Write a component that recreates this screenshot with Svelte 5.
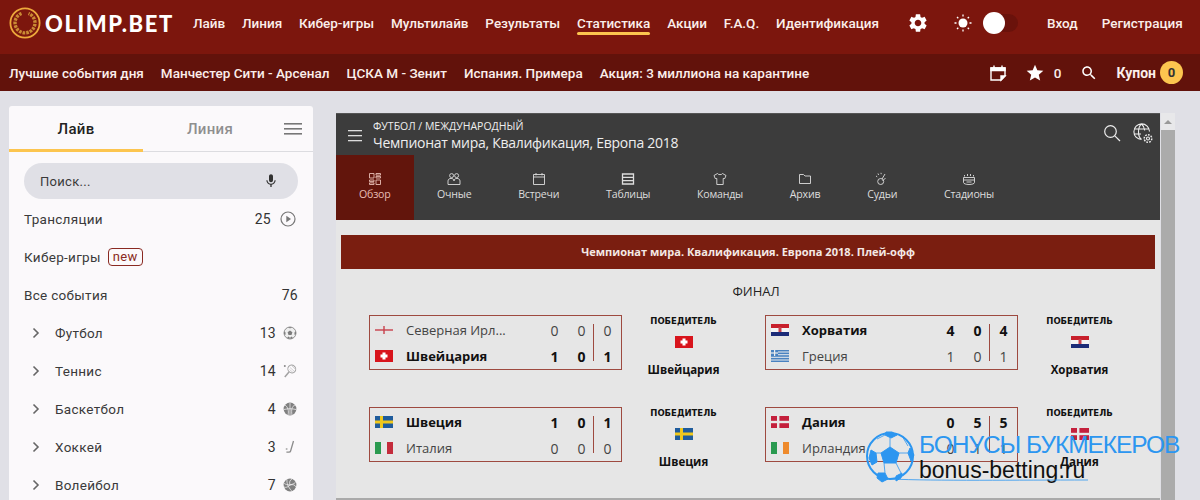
<script lang="ts">
  const nav = ["Лайв", "Линия", "Кибер-игры", "Мультилайв", "Результаты", "Статистика", "Акции", "F.A.Q.", "Идентификация"];
  const sub = ["Лучшие события дня", "Манчестер Сити - Арсенал", "ЦСКА М - Зенит", "Испания. Примера", "Акция: 3 миллиона на карантине"];
  const sports = [
    { name: "Футбол", count: 13, icon: "football" },
    { name: "Теннис", count: 14, icon: "tennis" },
    { name: "Баскетбол", count: 4, icon: "basket" },
    { name: "Хоккей", count: 3, icon: "hockey" },
    { name: "Волейбол", count: 7, icon: "volley" }
  ];
  const tabs = ["Обзор", "Очные", "Встречи", "Таблицы", "Команды", "Архив", "Судьи", "Стадионы"];
  const matches = [
    { a: { flag: "nir", name: "Северная Ирл...", s: [0, 0, 0] }, b: { flag: "ch", name: "Швейцария", s: [1, 0, 1], win: true } },
    { a: { flag: "hr", name: "Хорватия", s: [4, 0, 4], win: true }, b: { flag: "gr", name: "Греция", s: [1, 0, 1] } },
    { a: { flag: "se", name: "Швеция", s: [1, 0, 1], win: true }, b: { flag: "it", name: "Италия", s: [0, 0, 0] } },
    { a: { flag: "dk", name: "Дания", s: [0, 5, 5], win: true }, b: { flag: "ie", name: "Ирландия", s: [0, 1, 1] } }
  ];
  const winner = (m: any) => (m.a.win ? m.a : m.b);
</script>

{#snippet flag(code)}
  <svg class="flag" width="18" height="12" viewBox="0 0 18 12">
    {#if code === "nir"}
      <rect width="18" height="12" fill="#e6e4e4" /><rect y="5.3" width="18" height="1.4" fill="#c8404c" /><rect x="8.3" y="2" width="1.4" height="8" fill="#c8404c" />
    {:else if code === "ch"}
      <rect width="18" height="12" fill="#d8141c" /><rect x="7.5" y="2.5" width="3" height="7" fill="#fff" /><rect x="5.5" y="4.5" width="7" height="3" fill="#fff" />
    {:else if code === "hr"}
      <rect width="18" height="4" fill="#c8202c" /><rect y="4" width="18" height="4" fill="#f4f4f4" /><rect y="8" width="18" height="4" fill="#1c2c78" /><rect x="7.5" y="3" width="3" height="5" fill="#c8404c" />
    {:else if code === "gr"}
      <rect width="18" height="12" fill="#4a82c0" /><rect y="1.5" width="18" height="1" fill="#eee" /><rect y="4.2" width="18" height="1" fill="#eee" /><rect y="6.8" width="18" height="1" fill="#eee" /><rect y="9.5" width="18" height="1" fill="#eee" /><rect width="7" height="6" fill="#4a82c0" /><rect x="3" width="1.2" height="6" fill="#eee" /><rect y="2.4" width="7" height="1.2" fill="#eee" />
    {:else if code === "se"}
      <rect width="18" height="12" fill="#1f5c9c" /><rect x="5" width="3" height="12" fill="#f0c81c" /><rect y="4.5" width="18" height="3" fill="#f0c81c" />
    {:else if code === "it"}
      <rect width="6" height="12" fill="#2a9a50" /><rect x="6" width="6" height="12" fill="#e8e8e8" /><rect x="12" width="6" height="12" fill="#c42c3c" />
    {:else if code === "dk"}
      <rect width="18" height="12" fill="#c4203c" /><rect x="6" width="2.4" height="12" fill="#e8e8e8" /><rect y="4.8" width="18" height="2.4" fill="#e8e8e8" />
    {:else}
      <rect width="6" height="12" fill="#2a9a50" /><rect x="6" width="6" height="12" fill="#e8e8e8" /><rect x="12" width="6" height="12" fill="#ee8a2c" />
    {/if}
  </svg>
{/snippet}

{#snippet sportIcon(kind)}
  <svg class="sport" width="14" height="14" viewBox="0 0 14 14">
    {#if kind === "football"}
      <circle cx="7" cy="7" r="6" fill="#eeeeee" stroke="#8e8e8e" stroke-width="1" />
      <path d="M7 4.400 9.400 6.200 8.500 9H5.500L4.600 6.200zM5.200 1.200H8.800L7 2.600zM1.200 5.400 2.600 6.400 2.400 9 1 8zM12.800 5.400 11.400 6.400 11.600 9 13 8zM4 12l1.400-1.400 1.400 1L6.400 13zM10 12l-1.400-1.400-1.400 1L7.600 13z" fill="#7c7c7c" />
    {:else if kind === "tennis"}
      <ellipse cx="8.800" cy="5" rx="4" ry="3.800" fill="none" stroke="#a2a2a2" stroke-width="1" transform="rotate(40 8.800 5)" />
      <path d="M6 8 1.800 13" stroke="#a2a2a2" stroke-width="1.500" />
      <path d="M7 3.500l4 3.500M6.500 5.500l3.500 3M9 2l3 3" stroke="#bcbcbc" stroke-width=".6" />
      <circle cx="1.800" cy="2" r="1" fill="#888" />
    {:else if kind === "basket"}
      <circle cx="7" cy="7" r="6.400" fill="#808080" />
      <path d="M2 3c3 2 4 6 3 10M12 3C9 4 8 8 9 13M1 7.500c4-1 8-1 12 0M7 .8v12.400" stroke="#fbf9fb" stroke-width=".7" fill="none" />
    {:else if kind === "hockey"}
      <path d="M10.500 1 7.600 11c-.2.8-.8 1.200-1.600 1.200H3.400" stroke="#8c8c8c" stroke-width="1.300" fill="none" />
      <circle cx="3.600" cy="9" r="1" fill="#b0b0b0" />
    {:else}
      <circle cx="7" cy="7" r="6.400" fill="#808080" />
      <path d="M7 7C6 4 7 2 9 1M7 7c3-1 5 0 6 2M7 7c-2 2-4 3-6 2M4 1.600C3.600 5 5 9 8.600 12.800M1.200 5.400C4 7.400 8 7.600 12.400 4.600" stroke="#fbf9fb" stroke-width=".7" fill="none" />
    {/if}
  </svg>
{/snippet}

{#snippet tabIcon(i)}
  <svg class="tab-icon" width="14" height="14" viewBox="0 0 14 14" fill="none" stroke="currentColor" stroke-width=".9">
    {#if i === 0}
      <path d="M1.500 1.500h4.500v4.500h-4.500zM8 1.500h4.500v1.600H8zM8 4.400h4.500V6H8zM1.500 8h4.500v1.600H1.500zM1.500 10.900h4.500v1.600H1.500zM8 8h4.500v4.500H8z" />
    {:else if i === 1}
      <circle cx="4.600" cy="3.600" r="2" /><circle cx="9.600" cy="3.600" r="2" /><path d="M1 12.500V9c0-1.600 1.400-2.600 3-2.600s3 .8 3 2.600c0-1.800 1.400-2.600 3-2.600s3 1 3 2.600v3.500z" />
    {:else if i === 2}
      <path d="M1.500 2.500h11v10h-11zM1.500 5h11M4 1v2.400M10 1v2.400" />
    {:else if i === 3}
      <path d="M1.500 2h11v10h-11zM1.500 5.300h11M1.500 8.600h11" stroke-width="1.300" />
    {:else if i === 4}
      <path d="M4.500 1.500 1 3.500 2.200 6.500h1.600v6h6.400v-6h1.600L13 3.500 9.500 1.500C9 3 5 3 4.500 1.500z" />
    {:else if i === 5}
      <path d="M1.500 2.500h4l1.500 1.500h5.500v7.500h-11z" />
    {:else if i === 6}
      <circle cx="5.700" cy="9.500" r="3" /><path d="M7 7 10 2M7.500 9l3-3M3 1.500l.6 1.500M6 .8l.2 1.400M1 4l1.200.8" />
    {:else}
      <path d="M1.500 5.500h11v5c0 1.200-2.500 2-5.500 2s-5.500-.8-5.500-2zM1.500 8h11M4.500 10h5M2.500 3v1.500M5.500 2v2M8.500 2v2M11.500 3v1.500" />
    {/if}
  </svg>
{/snippet}

<div class="page">
  <header class="topbar">
    <a class="logo" href="#top">
      <svg width="32" height="32" viewBox="0 0 32 32">
        <circle cx="16" cy="16" r="14.600" fill="#7c160d" stroke="#eda93c" stroke-width="1.800" />
        <path d="M12.500 6.500A10 10 0 1 0 19.500 6.500" fill="none" stroke="#c98a34" stroke-width="3.400" stroke-dasharray="2.600 1" />
      </svg>
      <span>OLIMP.BET</span>
    </a>
    <nav class="nav">
      {#each nav as item}
        <span class="nav-item" class:active={item === "Статистика"}>{item}</span>
      {/each}
    </nav>
    <div class="top-right">
      <svg class="gear" width="22" height="22" viewBox="0 0 24 24" fill="#fff"><path d="M19.14 12.94c.04-.3.06-.61.06-.94 0-.32-.02-.64-.07-.94l2.03-1.58c.18-.14.23-.41.12-.61l-1.92-3.32c-.12-.22-.37-.29-.59-.22l-2.39.96c-.5-.38-1.03-.7-1.62-.94l-.36-2.54c-.04-.24-.24-.41-.48-.41h-3.84c-.24 0-.43.17-.47.41l-.36 2.54c-.59.24-1.13.57-1.62.94l-2.39-.96c-.22-.08-.47 0-.59.22L2.74 8.87c-.12.21-.08.47.12.61l2.03 1.58c-.05.3-.09.63-.09.94s.02.64.07.94l-2.03 1.58c-.18.14-.23.41-.12.61l1.92 3.32c.12.22.37.29.59.22l2.39-.96c.5.38 1.03.7 1.62.94l.36 2.54c.05.24.24.41.48.41h3.84c.24 0 .44-.17.47-.41l.36-2.54c.59-.24 1.13-.56 1.62-.94l2.39.96c.22.08.47 0 .59-.22l1.92-3.32c.12-.22.07-.47-.12-.61l-2.01-1.58zM12 15.6c-1.98 0-3.6-1.62-3.6-3.6s1.62-3.6 3.6-3.6 3.6 1.62 3.6 3.6-1.62 3.6-3.6 3.6z" /></svg>
      <svg class="sun" width="20" height="20" viewBox="0 0 20 20">
        <circle cx="10" cy="10" r="4.500" fill="#fff" />
        <path d="M10 1.500v2M10 16.500v2M1.500 10h2M16.500 10h2M4 4l1.300 1.300M14.700 14.700 16 16M4 16l1.300-1.300M14.700 5.300 16 4" stroke="#fff" stroke-width="1.300" />
      </svg>
      <div class="toggle"><span class="knob"></span></div>
      <span class="auth login">Вход</span>
      <span class="auth">Регистрация</span>
    </div>
  </header>

  <div class="subbar">
    <div class="sub-links">
      {#each sub as item}<span>{item}</span>{/each}
    </div>
    <div class="sub-right">
      <svg class="cal" width="18" height="18" viewBox="0 0 18 18" fill="none" stroke="#fff" stroke-width="1.400"><path d="M2 4h14v8l-4 4H2zM5 1.500V4M13 1.500V4" /><path d="M2 4h14v2.500H2z" fill="#fff" /><path d="M16 12h-4v4z" fill="#fff" /></svg>
      <svg class="star" width="20" height="20" viewBox="0 0 24 24" fill="#fff"><path d="M12 17.27 18.18 21l-1.64-7.03L22 9.24l-7.19-.61L12 2 9.19 8.63 2 9.24l5.46 4.73L5.82 21z" /></svg>
      <span class="fav-count">0</span>
      <svg class="find" width="18" height="18" viewBox="0 0 24 24" fill="#fff"><path d="M15.5 14h-.79l-.28-.27C15.41 12.59 16 11.11 16 9.5 16 5.91 13.09 3 9.5 3S3 5.91 3 9.5 5.91 16 9.5 16c1.61 0 3.09-.59 4.23-1.57l.27.28v.79l5 4.99L20.49 19l-4.99-5zm-6 0C7.01 14 5 11.99 5 9.5S7.01 5 9.5 5 14 7.01 14 9.5 11.99 14 9.5 14z" /></svg>
      <span class="coupon">Купон</span>
      <span class="badge">0</span>
    </div>
  </div>

  <div class="body">
    <aside class="sidebar">
      <div class="side-tabs">
        <span class="side-tab on">Лайв</span>
        <span class="side-tab">Линия</span>
        <svg class="burger" width="18" height="12" viewBox="0 0 18 12" fill="#777"><rect width="18" height="1.600" /><rect y="5" width="18" height="1.600" /><rect y="10" width="18" height="1.600" /></svg>
      </div>
      <div class="search">
        <span>Поиск...</span>
        <svg width="16" height="16" viewBox="0 0 24 24" fill="#333"><path d="M12 14c1.66 0 2.99-1.34 2.99-3L15 5c0-1.66-1.34-3-3-3S9 3.34 9 5v6c0 1.66 1.34 3 3 3zm5.3-3c0 3-2.54 5.1-5.3 5.1S6.7 14 6.7 11H5c0 3.41 2.72 6.23 6 6.72V21h2v-3.28c3.28-.48 6-3.3 6-6.72h-1.700z" /></svg>
      </div>
      <div class="row">
        <span class="grow">Трансляции</span>
        <span class="num">25</span>
        <svg class="play" width="16" height="16" viewBox="0 0 16 16"><circle cx="8" cy="8" r="7" fill="none" stroke="#777" stroke-width="1.200" /><path d="M6.300 4.800v6.400L11 8z" fill="#777" /></svg>
      </div>
      <div class="row">
        <span>Кибер-игры</span>
        <span class="new">new</span>
      </div>
      <div class="row">
        <span class="grow">Все события</span>
        <span class="num">76</span>
      </div>
      {#each sports as s}
        <div class="row sport-row">
          <svg class="chev" width="8" height="12" viewBox="0 0 8 12" fill="none" stroke="#666" stroke-width="1.600"><path d="M1.500 1.500 6 6l-4.500 4.500" /></svg>
          <span class="grow">{s.name}</span>
          <span class="num">{s.count}</span>
          {@render sportIcon(s.icon)}
        </div>
      {/each}
    </aside>

    <main class="main">
      <div class="panel">
        <section class="dark">
          <div class="dark-head">
            <svg class="dark-burger" width="14" height="12" viewBox="0 0 14 12" fill="#ddd"><rect width="14" height="1.300" /><rect y="5" width="14" height="1.300" /><rect y="10" width="14" height="1.300" /></svg>
            <div class="titles">
              <div class="crumb">ФУТБОЛ / МЕЖДУНАРОДНЫЙ</div>
              <div class="title">Чемпионат мира, Квалификация, Европа 2018</div>
            </div>
            <svg class="dark-search" width="18" height="18" viewBox="0 0 18 18" fill="none" stroke="#eee" stroke-width="1.200"><circle cx="7.500" cy="7.500" r="5.800" /><path d="M11.800 11.800 17 17" /></svg>
            <svg class="globe" width="20" height="21" viewBox="0 0 20 21" fill="none" stroke="#eee" stroke-width="1.100">
              <path d="M16.500 8.500A7.800 7.800 0 1 0 8.500 16.500M1 6h15M1 11h7M8.500 1C6 3 5.500 6 5.500 9s1 6 3 7.500M8.500 1c2.500 2 3 4 3.200 6.500" />
              <circle cx="15" cy="15.500" r="1.500" /><circle cx="15" cy="15.500" r="3.800" stroke-width="1.500" stroke-dasharray="1.800 1.100" />
            </svg>
          </div>
          <div class="dark-tabs">
            {#each tabs as t, i}
              <div class="dark-tab" class:on={i === 0}>
                {@render tabIcon(i)}
                <span>{t}</span>
              </div>
            {/each}
          </div>
        </section>

        <section class="content">
          <div class="banner">Чемпионат мира. Квалификация. Европа 2018. Плей-офф</div>
          <div class="stage">ФИНАЛ</div>
          <div class="grid">
            {#each matches as m}
              <div class="pair">
                <div class="box">
                  {#each [m.a, m.b] as team}
                    <div class="team" class:win={team.win}>
                      {@render flag(team.flag)}
                      <span class="name">{team.name}</span>
                      <span class="score">{team.s[0]}</span>
                      <span class="score">{team.s[1]}</span>
                      <span class="score total">{team.s[2]}</span>
                    </div>
                  {/each}
                  <span class="divider"></span>
                </div>
                <div class="winner">
                  <div class="w-label">ПОБЕДИТЕЛЬ</div>
                  {@render flag(winner(m).flag)}
                  <div class="w-name">{winner(m).name}</div>
                </div>
              </div>
            {/each}
          </div>
        </section>
      </div>

      <div class="scrollbar">
        <div class="arrow"><span></span></div>
        <div class="thumb"></div>
      </div>
    </main>
  </div>

  <div class="watermark">
    <svg class="wm-ball" width="225" height="54" viewBox="0 0 225 54" fill="none">
      <circle cx="24" cy="25" r="23" stroke="#2c96f0" stroke-width="2" />
      <path d="M24 16 33 22 30 32H18L15 22zM5 19l5 3 1 9-5 3-3-7zM44 17l-2 5 3 8 3-6zM20 1l6 0 5 3-6 3-6-3zM12 42l7 0 3 6-6 3-5-4zM30 45l6-3-1 5-5 3z" fill="#2c96f0" stroke="#2c96f0" />
      <path d="M24 16V7M15 22 10 22M33 22 42 22M18 32 19 42M30 32 35 42M11 8 19 4M36 5 42 15" stroke="#2c96f0" stroke-width=".8" />
      <path d="M24 48C70 50 150 49 222 49" stroke="#2c96f0" stroke-width="1" opacity=".8" />
    </svg>
    <div class="wm-text">
      <div class="wm-top">БОНУСЫ БУКМЕКЕРОВ</div>
      <div class="wm-bottom">bonus-betting.ru</div>
    </div>
  </div>
</div>

<style>
  :global(body) {
    margin: 0;
  }

  .page {
    position: relative;
    width: 1200px;
    height: 500px;
    overflow: hidden;
    background: #e0e0e6;
    font-family: Roboto, "Liberation Sans", sans-serif;
  }

  .topbar {
    display: flex;
    height: 46px;
    padding: 0 17px 8px 9px;
    align-items: center;
    background: #7c160d;
    color: #fbeeea;
    white-space: nowrap;
  }

  .logo {
    display: flex;
    flex: none;
    align-items: center;
    gap: 4px;
    width: 184px;
    color: #fff;
    text-decoration: none;
  }

  .logo span {
    font-family: Lato, Roboto, sans-serif;
    font-weight: 900;
    font-size: 22px;
    letter-spacing: 1.600px;
  }

  .nav {
    display: flex;
    flex: none;
    gap: 16.850px;
    font-size: 13.500px;
    font-weight: 500;
    line-height: 16px;
  }

  .nav-item {
    position: relative;
  }

  .nav-item.active::after {
    content: "";
    position: absolute;
    left: 0;
    right: 0;
    bottom: -4px;
    height: 3px;
    border-radius: 2px;
    background: #fcc54f;
  }

  .top-right {
    display: flex;
    flex: 1;
    align-items: center;
    font-size: 13.500px;
    font-weight: 500;
  }

  .gear {
    margin-left: 28px;
  }

  .sun {
    margin-left: 24px;
  }

  .toggle {
    position: relative;
    width: 35px;
    height: 18px;
    margin-left: 10px;
    border-radius: 9px;
    background: #6a120b;
  }

  .knob {
    position: absolute;
    left: 0;
    top: -2px;
    width: 22px;
    height: 22px;
    border-radius: 50%;
    background: #fff;
  }

  .login {
    margin: 0 24px 0 29px;
  }

  .subbar {
    display: flex;
    height: 37px;
    padding: 0 17px 0 9px;
    align-items: center;
    justify-content: space-between;
    background: #62120b;
    color: #fbeeea;
    font-size: 13.500px;
    font-weight: 500;
  }

  .sub-links {
    display: flex;
    gap: 17px;
  }

  .sub-right {
    display: flex;
    align-items: center;
  }

  .star {
    margin-left: 18px;
  }

  .fav-count {
    margin-left: 9px;
  }

  .find {
    margin-left: 19px;
  }

  .coupon {
    margin-left: 18px;
    font-size: 14px;
    font-weight: 700;
  }

  .badge {
    display: flex;
    width: 23px;
    height: 23px;
    margin-left: 4px;
    align-items: center;
    justify-content: center;
    border-radius: 50%;
    background: #fcc54f;
    color: #333;
    font-size: 13px;
    font-weight: 700;
  }

  .body {
    display: flex;
    align-items: flex-start;
    padding: 15px 0 0 9px;
  }

  .sidebar {
    width: 304px;
    height: 400px;
    flex: none;
    background: #fbf9fb;
    border-radius: 3px 3px 0 0;
    color: #3a3a3a;
    font-size: 13.500px;
    letter-spacing: 0.300px;
  }

  .side-tabs {
    position: relative;
    display: flex;
    height: 45px;
    border-bottom: 1px solid #dcdce0;
    font-size: 15px;
    font-weight: 500;
  }

  .side-tab {
    display: flex;
    width: 134px;
    align-items: center;
    justify-content: center;
    color: #8f8f8f;
  }

  .side-tab.on {
    border-bottom: 3px solid #fcc54f;
    margin-bottom: -1px;
    padding-top: 2px;
    color: #222;
  }

  .burger {
    position: absolute;
    right: 11px;
    top: 17px;
  }

  .search {
    display: flex;
    height: 36px;
    margin: 11px 15px 1px;
    padding: 0 19px 0 16px;
    align-items: center;
    justify-content: space-between;
    border-radius: 18px;
    background: #e0e0e6;
    font-size: 13px;
  }

  .row {
    display: flex;
    height: 38px;
    padding: 0 15px;
    align-items: center;
  }

  .grow {
    flex: 1;
  }

  .num {
    color: #333;
    font-size: 14px;
  }

  .play {
    margin: 0 2px 0 9px;
  }

  .new {
    margin-left: 7px;
    padding: 0 4px;
    border: 1px solid #8a2a22;
    border-radius: 4px;
    color: #8a2a22;
    font-size: 13px;
    line-height: 16px;
  }

  .sport-row {
    padding-left: 23px;
  }

  .chev {
    margin-right: 15px;
  }

  .sport {
    margin: 0 1px 0 7px;
  }

  .main {
    display: flex;
    margin: 7px 0 0 23px;
    align-items: flex-start;
  }

  .panel {
    width: 824px;
    font-family: "Open Sans", "Liberation Sans", sans-serif;
  }

  .dark {
    background: #3c3c3c;
    border-top: 1px solid #555;
    color: #eee;
  }

  .dark-head {
    display: flex;
    height: 41px;
    padding: 0 7px 0 12px;
    align-items: center;
  }

  .dark-burger {
    margin-top: 2px;
  }

  .titles {
    flex: 1;
    margin-left: 11px;
    padding-top: 3px;
  }

  .crumb {
    font-size: 10.500px;
    line-height: 14px;
  }

  .title {
    font-size: 14px;
    line-height: 20px;
    letter-spacing: -0.270px;
  }

  .dark-search {
    margin: -4px 12px 0 0;
  }

  .globe {
    margin-top: -2px;
  }

  .dark-tabs {
    display: flex;
    height: 65px;
  }

  .dark-tab {
    display: flex;
    padding: 17px 23.400px 0;
    flex-direction: column;
    align-items: center;
    gap: 1px;
    color: #ddd;
    font-size: 10.600px;
    letter-spacing: -0.200px;
  }

  .dark-tab.on {
    padding: 17px 23px 0;
    background: #62150c;
    color: #e8bdb4;
  }

  .content {
    height: 263px;
    padding: 15px 5px 0;
    background: #e6e6e6;
    border-bottom: 2px solid #aaa;
  }

  .banner {
    height: 34px;
    background: #7a1e10;
    color: #f4e8e4;
    font-size: 11.050px;
    font-weight: 700;
    line-height: 34px;
    text-align: center;
  }

  .stage {
    margin: 13px 0 15px;
    padding-left: 16px;
    font-size: 13px;
    line-height: 18px;
    color: #222;
    text-align: center;
  }

  .grid {
    display: grid;
    grid-template-columns: 396px 396px;
    row-gap: 37px;
    padding-left: 28px;
  }

  .pair {
    display: flex;
    height: 55px;
  }

  .box {
    position: relative;
    width: 251px;
    height: 52px;
    border: 1px solid #9e4a40;
    padding-top: 1px;
  }

  .team {
    display: flex;
    height: 26px;
    padding-left: 5px;
    align-items: center;
    color: #444;
    font-size: 13px;
  }

  .team.win {
    color: #111;
    font-weight: 700;
  }

  .flag {
    flex: none;
  }

  .name {
    flex: 1;
    margin-left: 13px;
  }

  .score {
    width: 27px;
    font-size: 14px;
    text-align: center;
  }

  .score.total {
    margin-left: -1px;
  }

  .divider {
    position: absolute;
    right: 27px;
    top: 8px;
    height: 37px;
    width: 1px;
    background: #9e4a40;
  }

  .winner {
    display: flex;
    width: 121px;
    margin-left: 1px;
    padding-top: 1px;
    flex-direction: column;
    align-items: center;
    color: #111;
  }

  .w-label {
    margin-bottom: 9px;
    font-family: "DejaVu Sans", sans-serif;
    font-size: 8.500px;
    font-weight: 700;
    line-height: 11px;
  }

  .w-name {
    margin-top: 14px;
    font-size: 11.500px;
    font-weight: 700;
  }

  .scrollbar {
    width: 14px;
    height: 400px;
    margin-left: 1px;
    background: #e8e8ea;
  }

  .arrow {
    display: flex;
    height: 17px;
    align-items: center;
    justify-content: center;
  }

  .arrow span {
    width: 0;
    height: 0;
    border-left: 4px solid transparent;
    border-right: 4px solid transparent;
    border-bottom: 4px solid #999;
  }

  .thumb {
    height: 380px;
    background: #ababab;
  }

  .watermark {
    position: absolute;
    left: 866px;
    top: 431px;
    display: flex;
    font-family: "Liberation Sans", sans-serif;
  }

  .wm-ball {
    position: absolute;
    left: 0;
    top: 0;
  }

  .wm-text {
    padding-left: 53px;
  }

  .wm-top {
    color: #2c96f0;
    font-size: 24.500px;
    line-height: 28px;
    letter-spacing: -1.050px;
    white-space: nowrap;
  }

  .wm-bottom {
    margin-top: -2px;
    color: #111;
    font-size: 23px;
    line-height: 26px;
    white-space: nowrap;
  }
</style>
